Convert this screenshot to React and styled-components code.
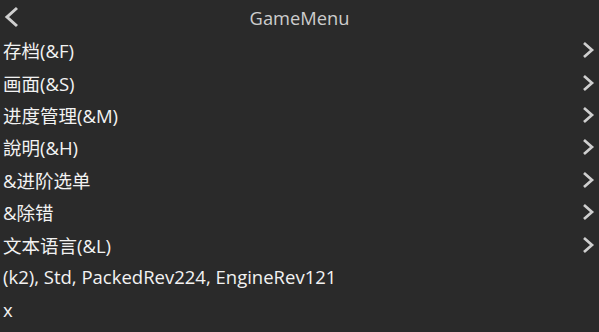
import React from "react";
import styled, { createGlobalStyle } from "styled-components";

const GlobalStyle = createGlobalStyle`
  html, body {
    margin: 0;
    padding: 0;
    background: #2a2a2a;
  }
  body {
    font-family: "Open Sans", "Noto Sans CJK SC", sans-serif;
  }
`;

const items = [
  { label: "存档(&F)", sub: true },
  { label: "画面(&S)", sub: true },
  { label: "进度管理(&M)", sub: true },
  { label: "說明(&H)", sub: true },
  { label: "&进阶选单", sub: true },
  { label: "&除错", sub: true },
  { label: "文本语言(&L)", sub: true },
  { label: "(k2), Std, PackedRev224, EngineRev121", sub: false },
  { label: "x", sub: false },
];

export default function App() {
  return (
    <>
      <GlobalStyle />
      <Screen>
        <TitleBar>
          <BackButton aria-label="back">
            <svg width="16" height="22" viewBox="0 0 16 22">
              <path d="M13 2 L3 11 L13 20" fill="none" stroke="#cfcfcf" strokeWidth="3" />
            </svg>
          </BackButton>
          <Title>GameMenu</Title>
        </TitleBar>
        <MenuList>
          {items.map((item) => (
            <MenuRow key={item.label}>
              <Label>{item.label}</Label>
              {item.sub && (
                <svg width="13" height="18" viewBox="0 0 13 18">
                  <path d="M2 2 L10 9 L2 16" fill="none" stroke="#cfcfcf" strokeWidth="2.7" />
                </svg>
              )}
            </MenuRow>
          ))}
        </MenuList>
      </Screen>
    </>
  );
}

const Screen = styled.div`
  width: 599px;
  height: 332px;
  background: #2a2a2a;
  overflow: hidden;
`;

const TitleBar = styled.div`
  position: relative;
  height: 34px;
  display: flex;
  align-items: center;
  justify-content: center;
`;

const BackButton = styled.div`
  position: absolute;
  left: 4px;
  top: 6px;
  display: flex;
`;

const Title = styled.div`
  color: #cdcdcd;
  font-size: 18.3px;
`;

const MenuList = styled.div`
  display: flex;
  flex-direction: column;
`;

const MenuRow = styled.div`
  height: 32.4px;
  display: flex;
  align-items: center;
  justify-content: space-between;
  padding: 0 4px 0 3px;
`;

const Label = styled.span`
  color: #f2f2f2;
  font-size: 18.5px;
  white-space: nowrap;
`;
